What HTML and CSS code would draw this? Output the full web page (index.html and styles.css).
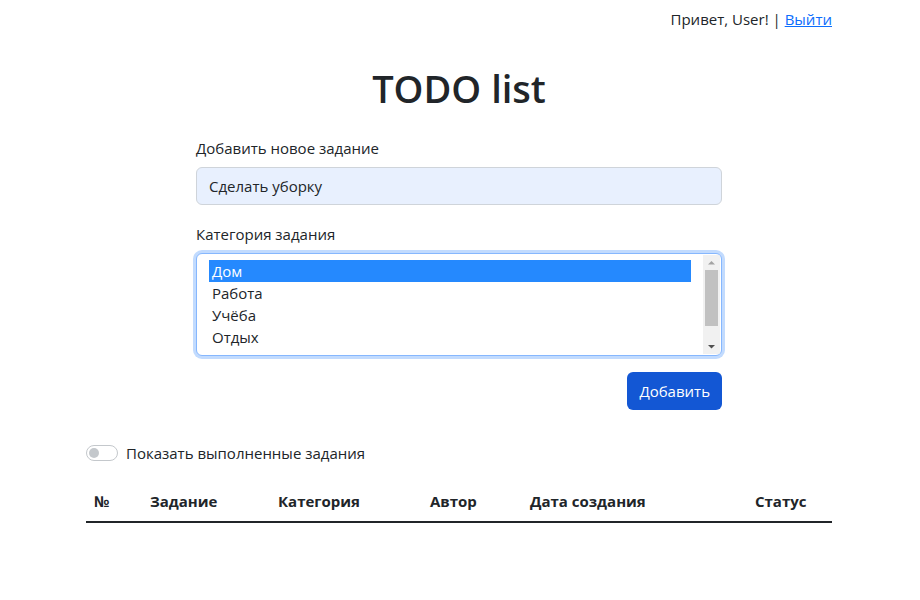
FILE: index.html
```html
<!DOCTYPE html>
<html lang="ru">
<head>
<meta charset="utf-8">
<title>TODO list</title>
<link rel="stylesheet" href="styles.css">
</head>
<body>
<div class="container">
  <div class="topbar">Привет, User! | <a href="#" class="link">Выйти</a></div>
  <h1 class="title">TODO list</h1>
  <form class="form">
    <label class="label">Добавить новое задание</label>
    <div class="input">Сделать уборку</div>
    <label class="label label-cat">Категория задания</label>
    <div class="listbox">
      <div class="options">
        <div class="option selected">Дом</div>
        <div class="option">Работа</div>
        <div class="option">Учёба</div>
        <div class="option">Отдых</div>
      </div>
      <div class="scrollbar">
        <svg class="arrow" width="15" height="15" viewBox="0 0 15 15"><path d="M4 9.5 L7.5 6 L11 9.5 Z" fill="#a3a3a3"/></svg>
        <div class="thumb"></div>
        <div class="track-fill"></div>
        <svg class="arrow" width="15" height="15" viewBox="0 0 15 15"><path d="M4 6 L7.5 9.5 L11 6 Z" fill="#505050"/></svg>
      </div>
    </div>
    <div class="actions"><button type="button" class="btn">Добавить</button></div>
  </form>
  <div class="switch-row">
    <span class="switch"><span class="knob"></span></span>
    <span class="switch-label">Показать выполненные задания</span>
  </div>
  <table class="table">
    <colgroup>
      <col class="c1"><col class="c2"><col class="c3"><col class="c4"><col class="c5"><col class="c6">
    </colgroup>
    <thead>
      <tr><th>№</th><th>Задание</th><th>Категория</th><th>Автор</th><th>Дата создания</th><th>Статус</th></tr>
    </thead>
  </table>
</div>
</body>
</html>
```
FILE: styles.css
```css
* { box-sizing: border-box; }
body {
  margin: 0;
  font-family: "Open Sans", "Noto Sans", sans-serif;
  font-size: 15px;
  color: #212529;
  background: #fff;
}
.container {
  width: 748px;
  padding-right: 2px;
  margin: 0 auto;
}
.topbar {
  display: flex;
  justify-content: flex-end;
  padding-top: 9px;
  line-height: 20px;
  font-size: 15px;
  white-space: pre;
}
.link { color: #0d6efd; text-decoration: underline; }
.title {
  margin: 36px 0 0;
  text-align: center;
  font-size: 38px;
  font-weight: 600;
  line-height: 46px;
}
.form {
  width: 526px;
  margin: 26px auto 0;
  display: flex;
  flex-direction: column;
}
.label {
  display: block;
  line-height: 22px;
  margin-bottom: 8px;
}
.label-cat { margin-top: 18px; margin-bottom: 8px; }
.input {
  height: 38px;
  border: 1px solid #cfd4da;
  border-radius: 6px;
  background: #e8f0fe;
  padding: 0 12px;
  line-height: 36px;
}
.listbox {
  height: 103px;
  border: 1px solid #86b7fe;
  border-radius: 6px;
  box-shadow: 0 0 0 3px #c2dbfe;
  display: flex;
  overflow: hidden;
  background: #fff;
}
.options {
  flex: 1;
  padding: 6px 12px 0 12px;
}
.option {
  height: 22px;
  line-height: 22px;
  padding-left: 3px;
}
.option.selected {
  background: #2589fe;
  color: #fff;
}
.scrollbar {
  width: 17px;
  margin: 1px 1px 1px 0;
  background: #f1f1f1;
  display: flex;
  flex-direction: column;
  align-items: center;
}
.arrow { flex: none; width: 15px; height: 15px; }
.thumb {
  width: 13px;
  height: 56px;
  background: #c1c1c1;
  flex: none;
}
.track-fill { flex: 1; }
.actions {
  display: flex;
  justify-content: flex-end;
  margin-top: 16px;
}
.btn {
  height: 38px;
  padding: 0 12px;
  border: none;
  border-radius: 6px;
  background: #1357d4;
  color: #fff;
  font-family: inherit;
  font-size: 15px;
}
.switch-row {
  display: flex;
  align-items: center;
  gap: 8px;
  margin-top: 34px;
  height: 18px;
}
.switch {
  width: 32px;
  height: 16px;
  border: 1px solid #c4c8cc;
  border-radius: 8px;
  display: flex;
  align-items: center;
  padding-left: 2px;
}
.knob {
  width: 10px;
  height: 10px;
  border-radius: 50%;
  background: #c4c8cc;
}
.switch-label { line-height: 20px; }
.table {
  width: 746px;
  border-collapse: collapse;
  margin-top: 20px;
  table-layout: fixed;
}
.table th {
  text-align: left;
  font-weight: 700;
  padding: 9px 8px 10px;
  line-height: 20px;
  border-bottom: 2px solid #212529;
}
.c1 { width: 56px; }
.c2 { width: 128px; }
.c3 { width: 152px; }
.c4 { width: 100px; }
.c5 { width: 225px; }
.c6 { width: 85px; }
```
